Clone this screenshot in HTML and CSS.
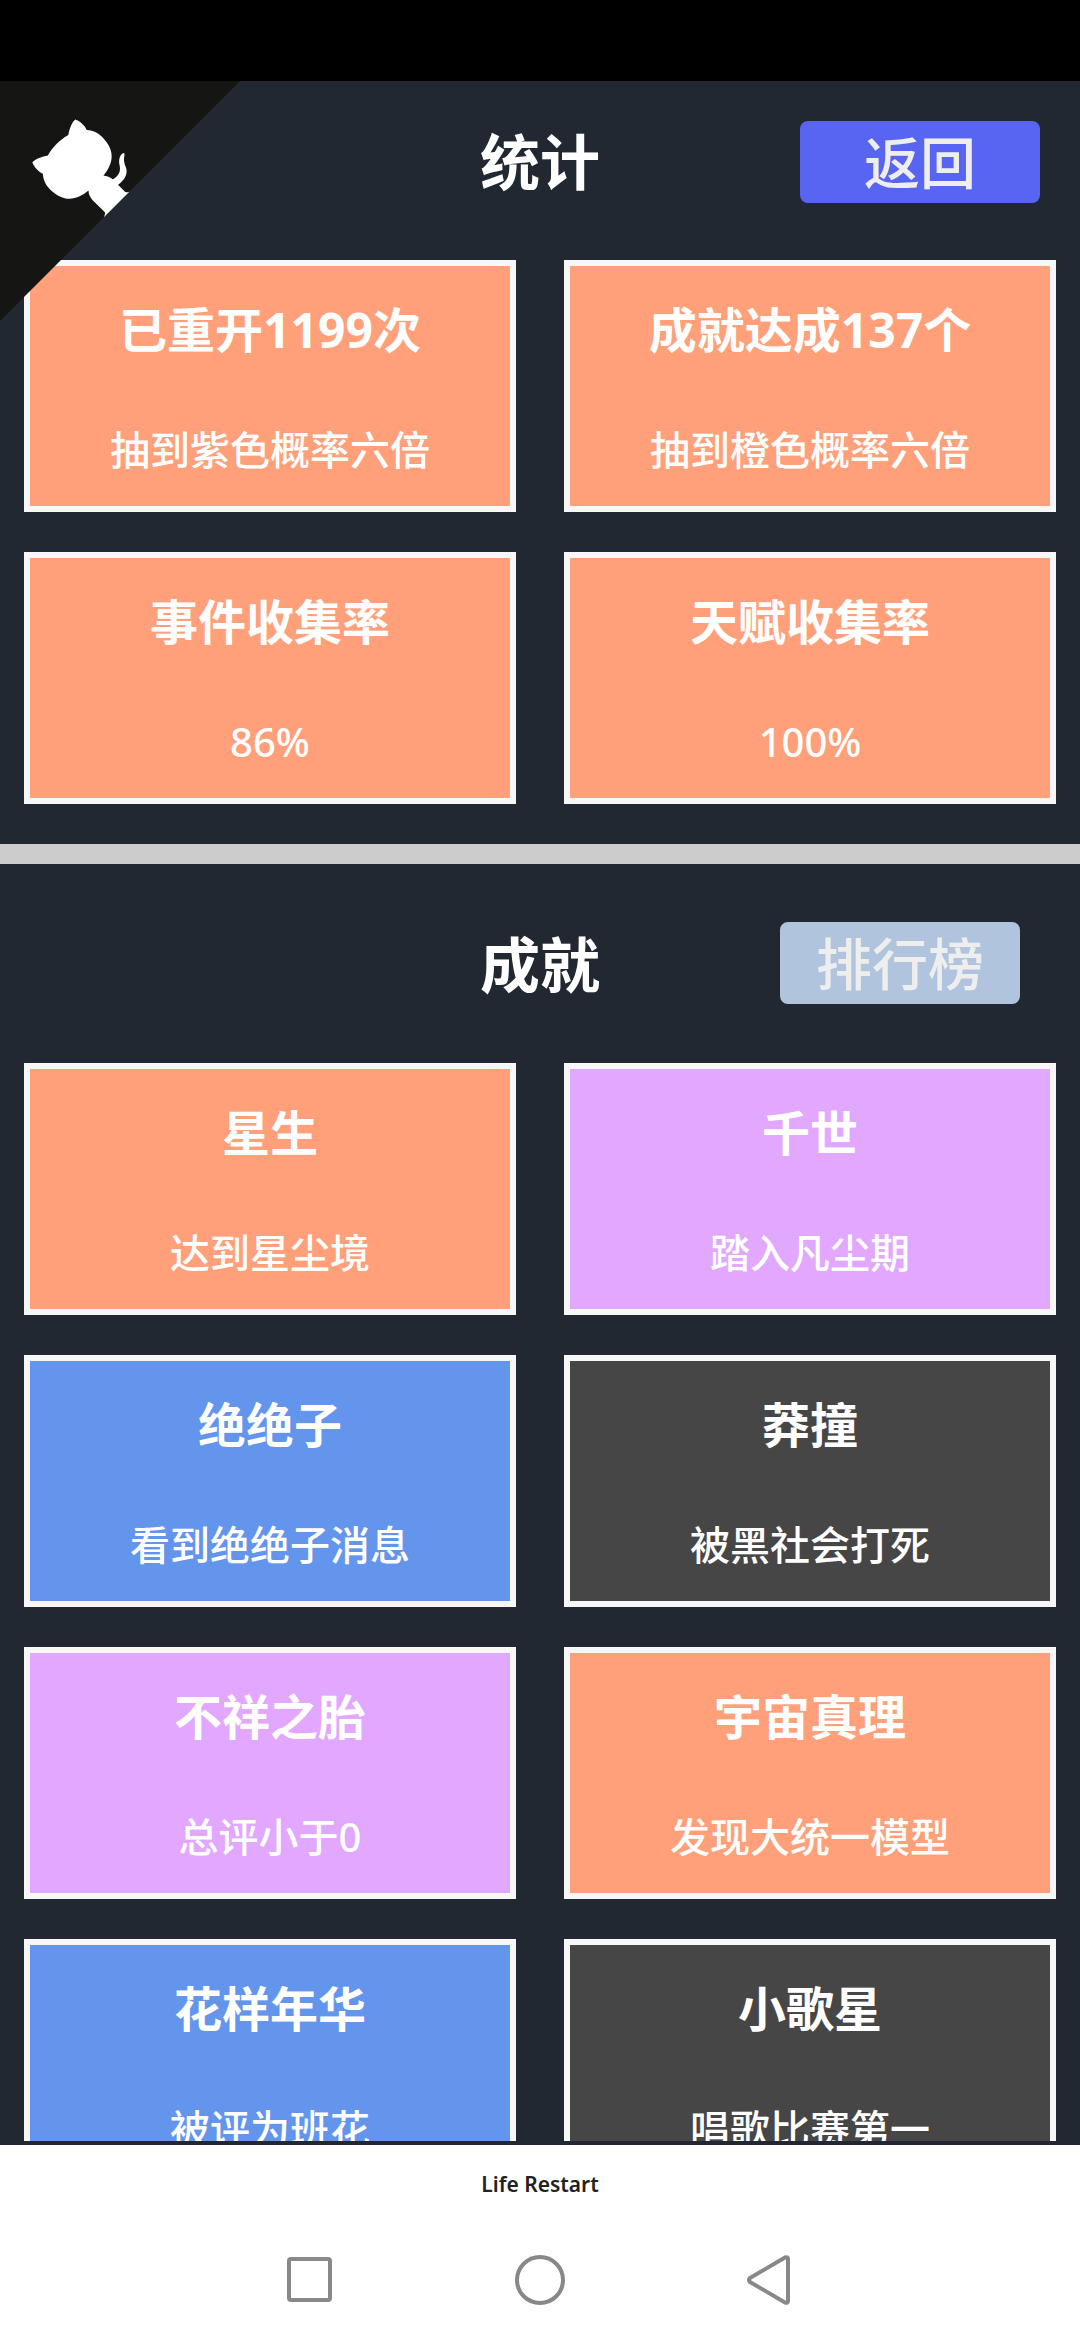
FILE: index.html
```
<!DOCTYPE html>
<html lang="zh-CN">
<head>
    <meta charset="UTF-8">
    <meta name="viewport" content="width=device-width, initial-scale=1.0">
    <title>Life Restart</title>
    <link rel="stylesheet" href="styles.css">
</head>
<body>
    <div class="status-bar"></div>

    <main class="app">
        <a href="#" class="github-corner" aria-label="GitHub">
            <svg viewBox="0 0 250 250" aria-hidden="true">
                <path class="corner" d="M0,0 L250,250 L250,0 Z"/>
                <path class="cat" d="M128.3,109.0 C113.8,99.7 119.0,89.6 119.0,89.6 C122.0,82.7 120.5,78.6 120.5,78.6 C119.2,72.0 123.4,76.3 123.4,76.3 C127.3,80.9 125.5,87.3 125.5,87.3 C122.9,97.6 130.6,101.9 134.4,103.2"/>
                <path class="cat" d="M115.0,115.0 C114.9,115.1 118.7,116.5 119.8,115.4 L133.7,101.6 C136.9,99.2 139.9,98.4 142.2,98.6 C133.8,88.0 127.5,74.4 143.8,58.0 C148.5,53.4 154.0,51.2 159.7,51.0 C160.3,49.4 163.2,43.6 171.4,40.1 C171.4,40.1 176.1,42.5 178.8,56.2 C183.1,58.6 187.2,61.8 190.9,65.4 C194.5,69.0 197.7,73.2 200.1,77.6 C213.8,80.2 216.3,84.9 216.3,84.9 C212.7,93.1 206.9,96.0 205.4,96.6 C205.1,102.4 203.0,107.8 198.3,112.5 C181.9,128.9 168.3,122.5 157.7,114.1 C157.9,116.9 156.7,120.9 152.7,124.9 L141.0,136.5 C139.8,137.7 141.6,141.9 141.8,141.8 Z"/>
            </svg>
        </a>

        <!-- Statistics -->
        <header class="head">
            <h2>统计</h2>
            <button class="btn back">返回</button>
        </header>
        <ul class="cards stats">
            <li class="grade3"><h3>已重开1199次</h3><p>抽到紫色概率六倍</p></li>
            <li class="grade3"><h3>成就达成137个</h3><p>抽到橙色概率六倍</p></li>
            <li class="grade3"><h3>事件收集率</h3><p>86%</p></li>
            <li class="grade3"><h3>天赋收集率</h3><p>100%</p></li>
        </ul>

        <!-- Achievements -->
        <header class="head achv">
            <h2>成就</h2>
            <button class="btn rank">排行榜</button>
        </header>
        <ul class="cards list">
            <li class="grade3"><h3>星生</h3><p>达到星尘境</p></li>
            <li class="grade2"><h3>千世</h3><p>踏入凡尘期</p></li>
            <li class="grade1"><h3>绝绝子</h3><p>看到绝绝子消息</p></li>
            <li class="grade0"><h3>莽撞</h3><p>被黑社会打死</p></li>
            <li class="grade2"><h3>不祥之胎</h3><p>总评小于0</p></li>
            <li class="grade3"><h3>宇宙真理</h3><p>发现大统一模型</p></li>
            <li class="grade1"><h3>花样年华</h3><p>被评为班花</p></li>
            <li class="grade0"><h3>小歌星</h3><p>唱歌比赛第一</p></li>
        </ul>
    </main>

    <footer class="bottom">
        <div class="app-name">Life Restart</div>
        <nav class="nav">
            <button aria-label="Recent apps"><svg viewBox="0 0 60 60"><rect x="9" y="9" width="41" height="41" rx="2"/></svg></button>
            <button aria-label="Home"><svg viewBox="0 0 60 60"><circle cx="30" cy="30" r="23"/></svg></button>
            <button aria-label="Back"><svg viewBox="0 0 60 60"><path d="M10 28 L45 7.500 Q48 6.500 48 9 L48 51 Q48 53.500 45 52.500 L10 32 Q8 30 10 28 Z"/></svg></button>
        </nav>
    </footer>
</body>
</html>
```
FILE: styles.css
```
* {
    box-sizing: border-box;
}
body {
    margin: 0;
    height: 100vh;
    display: flex;
    flex-direction: column;
    background-color: #222831;
    color: #fff;
    font-family: "Noto Sans", "Noto Sans CJK SC", sans-serif;
}
h2, h3, p, ul {
    margin: 0;
    padding: 0;
}
.status-bar {
    flex: none;
    height: 81px;
    background-color: #000;
}
.app {
    position: relative;
    flex: 1;
    min-height: 0;
    display: flex;
    flex-direction: column;
    padding-bottom: 4px;
}

/* corner ribbon, lies over the header and first card */
.github-corner {
    position: absolute;
    top: 0;
    left: 0;
    width: 240px;
    height: 240px;
}
.github-corner svg {
    display: block;
    transform: scale(-1, 1);
}
.corner {
    fill: #151513;
}
.cat {
    fill: #fff;
}

.head {
    flex: none;
    display: grid;
    grid-template-columns: 1fr auto 1fr;
    align-items: center;
    padding: 40px 40px 57px;
}
.head h2 {
    grid-column: 2;
    font-size: 60px;
    line-height: 80px;
}
.head.achv {
    padding: 58px 60px 59px;
    border-top: 20px solid #ccc;
}
.achv h2 {
    padding-top: 4px;
    line-height: 78px;
}
.btn {
    justify-self: end;
    width: 240px;
    height: 82px;
    padding: 0;
    border: none;
    border-radius: 8px;
    color: #eee;
    font-family: inherit;
    font-size: 56px;
    font-weight: 500;
    line-height: 80px;
    cursor: pointer;
}
.back {
    background-color: #5865f2;
}
.rank {
    background-color: #b0c4de;
}

.cards {
    list-style: none;
    display: grid;
    grid-template-columns: 1fr 1fr;
    gap: 40px 48px;
    padding: 0 24px;
    text-align: center;
}
.stats {
    flex: none;
    padding-bottom: 40px;
}
.list {
    flex: 1;
    min-height: 0;
    overflow-y: auto;
    scrollbar-width: none;
}
.cards li {
    border: 6px solid #f7f7f7;
    padding: 28px 0 26px;
}
.cards h3 {
    font-size: 48px;
    line-height: 72px;
    margin-bottom: 54px;
}
.cards p {
    font-size: 40px;
    font-weight: 500;
    line-height: 60px;
}
.grade0 {
    background-color: #464646;
}
.grade1 {
    background-color: #6495ed;
}
.grade2 {
    background-color: #e2a7ff;
}
.grade3 {
    background-color: #ffa07a;
}

.bottom {
    flex: none;
    padding: 23px 0 30px;
    background-color: #fff;
    color: #222;
}
.app-name {
    font-size: 21px;
    font-weight: 600;
    line-height: 32px;
    text-align: center;
}
.nav {
    display: flex;
    justify-content: center;
    gap: 170px;
    margin-top: 50px;
}
.nav button {
    width: 60px;
    height: 60px;
    padding: 0;
    border: none;
    background: none;
}
.nav svg {
    display: block;
    fill: none;
    stroke: #888;
    stroke-width: 4;
    stroke-linejoin: round;
}
```
